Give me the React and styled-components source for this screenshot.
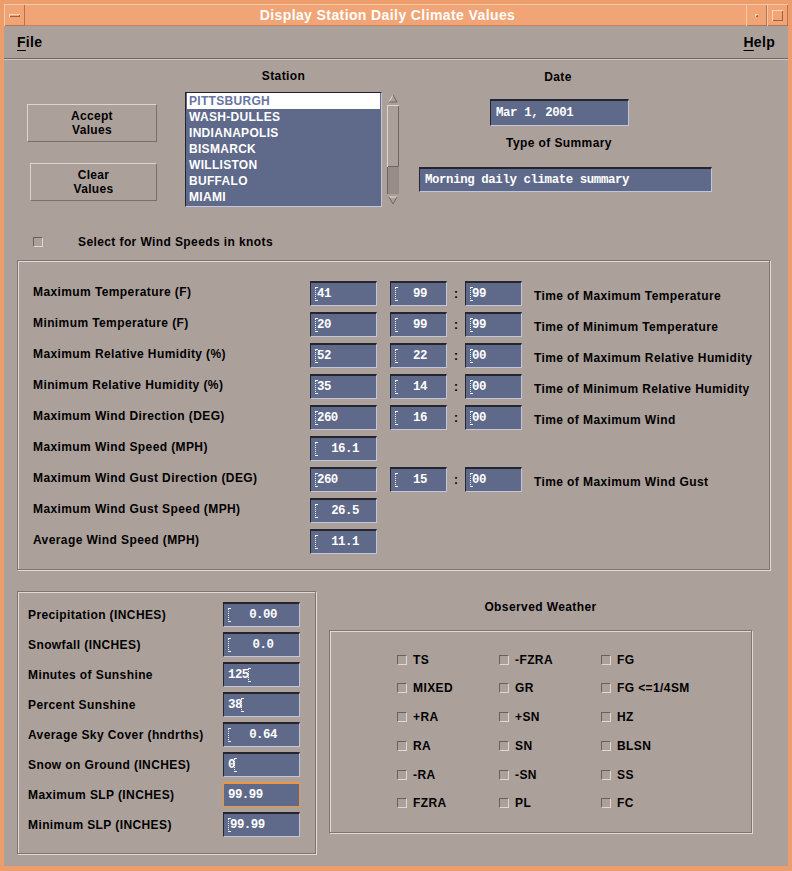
import React from 'react';
import styled, { createGlobalStyle } from 'styled-components';

const stations = ['PITTSBURGH', 'WASH-DULLES', 'INDIANAPOLIS', 'BISMARCK', 'WILLISTON', 'BUFFALO', 'MIAMI'];

const mainRows = [
  { label: 'Maximum Temperature (F)', v: '41', h: '99', m: '99', t: 'Time of Maximum Temperature' },
  { label: 'Minimum Temperature (F)', v: '20', h: '99', m: '99', t: 'Time of Minimum Temperature' },
  { label: 'Maximum Relative Humidity (%)', v: '52', h: '22', m: '00', t: 'Time of Maximum Relative Humidity' },
  { label: 'Minimum Relative Humidity (%)', v: '35', h: '14', m: '00', t: 'Time of Minimum Relative Humidity' },
  { label: 'Maximum Wind Direction (DEG)', v: '260', h: '16', m: '00', t: 'Time of Maximum Wind' },
  { label: 'Maximum Wind Speed (MPH)', v: '16.1', center: true },
  { label: 'Maximum Wind Gust Direction (DEG)', v: '260', h: '15', m: '00', t: 'Time of Maximum Wind Gust' },
  { label: 'Maximum Wind Gust Speed (MPH)', v: '26.5', center: true },
  { label: 'Average Wind Speed (MPH)', v: '11.1', center: true },
];

const sideRows = [
  { label: 'Precipitation (INCHES)', v: '0.00', cursor: 'center' },
  { label: 'Snowfall (INCHES)', v: '0.0', cursor: 'center' },
  { label: 'Minutes of Sunshine', v: '125', cursor: 'after' },
  { label: 'Percent Sunshine', v: '38', cursor: 'after' },
  { label: 'Average Sky Cover (hndrths)', v: '0.64', cursor: 'center' },
  { label: 'Snow on Ground (INCHES)', v: '0', cursor: 'after' },
  { label: 'Maximum SLP (INCHES)', v: '99.99', cursor: 'none', focus: true },
  { label: 'Minimum SLP (INCHES)', v: '99.99', cursor: 'before' },
];

const weather = [
  'TS', '-FZRA', 'FG',
  'MIXED', 'GR', 'FG <=1/4SM',
  '+RA', '+SN', 'HZ',
  'RA', 'SN', 'BLSN',
  '-RA', '-SN', 'SS',
  'FZRA', 'PL', 'FC',
];

const GlobalStyle = createGlobalStyle`
  body {
    margin: 0;
    background: #aca09b;
    font-family: "Liberation Sans", Arial, sans-serif;
  }
`;

const Window = styled.div`
  width: 792px;
  height: 871px;
  box-sizing: border-box;
  border: 4px solid #eb9d6b;
  border-bottom-width: 5px;
  background: #aca09b;
  display: flex;
  flex-direction: column;
`;

const TitleBar = styled.div`
  display: flex;
  height: 22px;
  background: #f1a577;
  box-shadow: inset 1px 1px 0 #f8c9a8, inset -1px -1px 0 #c98558;
`;

const TitleButton = styled.div`
  width: 21px;
  display: flex;
  align-items: center;
  justify-content: center;
  box-shadow: inset 1px 1px 0 #f8c9a8, inset -1px -1px 0 #b7744a;
`;

const MenuGlyph = styled.div`
  width: 11px;
  height: 3px;
  background: #f1a577;
  box-shadow: inset 1px 1px 0 #fbd6bd, inset -1px -1px 0 #9c6140;
`;

const MinGlyph = styled.div`
  width: 3px;
  height: 3px;
  box-shadow: inset 1px 1px 0 #fbd6bd, inset -1px -1px 0 #9c6140;
`;

const MaxGlyph = styled.div`
  width: 11px;
  height: 11px;
  box-shadow: inset 1px 1px 0 #fbd6bd, inset -1px -1px 0 #9c6140;
`;

const Title = styled.div`
  flex: 1;
  text-align: center;
  color: #fff;
  font-weight: bold;
  font-size: 14px;
  letter-spacing: 0.4px;
  line-height: 22px;
  padding-left: 4px;
`;

const MenuBar = styled.div`
  height: 32px;
  display: flex;
  justify-content: space-between;
  align-items: center;
  padding: 0 13px 0 13px;
  border-bottom: 1px solid #6f6661;
  box-shadow: 0 1px 0 #d3cac6;
`;

const MenuItem = styled.div`
  font-size: 14px;
  font-weight: bold;
  letter-spacing: 0.3px;
  span {
    text-decoration: underline;
    text-underline-offset: 3px;
  }
`;

const Content = styled.div`
  flex: 1;
  padding: 0 13px;
  display: flex;
  flex-direction: column;
`;

const TopRow = styled.div`
  display: flex;
  height: 148px;
`;

const ButtonCol = styled.div`
  width: 130px;
  margin-left: 10px;
  padding-top: 45px;
  display: flex;
  flex-direction: column;
  align-items: flex-end;
  gap: 21px;
`;

const PushButton = styled.div`
  width: ${p => p.$w}px;
  height: 38px;
  box-sizing: border-box;
  display: flex;
  align-items: center;
  justify-content: center;
  text-align: center;
  font-size: 12px;
  font-weight: bold;
  letter-spacing: 0.3px;
  line-height: 14px;
  border: 1px solid;
  border-color: #ddd5d1 #7b716c #7b716c #ddd5d1;
`;

const StationCol = styled.div`
  margin-left: 28px;
  width: 215px;
  padding-top: 9px;
`;

const Caption = styled.div`
  width: ${p => p.$w}px;
  text-align: center;
  font-size: 12px;
  font-weight: bold;
  letter-spacing: 0.4px;
  line-height: 16px;
`;

const ListRow = styled.div`
  display: flex;
  gap: 5px;
  margin-top: 8px;
`;

const ListBox = styled.div`
  width: 197px;
  height: 115px;
  box-sizing: border-box;
  background: #5f6a8b;
  border: 1px solid;
  border-color: #23232e #c2c6dc #c2c6dc #23232e;
  padding: 0 1px;
`;

const ListItem = styled.div`
  height: 16px;
  line-height: 16px;
  padding-left: 2px;
  font-size: 12px;
  font-weight: bold;
  letter-spacing: 0.3px;
  color: ${p => (p.$selected ? '#6874a2' : '#fff')};
  background: ${p => (p.$selected ? '#fff' : 'transparent')};
`;

const ScrollBar = styled.div`
  width: 12px;
  height: 115px;
  display: flex;
  flex-direction: column;
  background: #978c87;
  box-shadow: inset 1px 1px 0 #6f6661;
`;

const ScrollArrow = styled.div`
  height: 13px;
  display: flex;
  align-items: center;
  justify-content: center;
  background: #aca09b;
`;

const ScrollThumb = styled.div`
  height: 62px;
  background: #aca09b;
  box-shadow: inset 1px 1px 0 #ddd5d1, inset -1px -1px 0 #6f6661;
`;

const ScrollTrough = styled.div`
  flex: 1;
`;

const DateCol = styled.div`
  margin-left: 19px;
  width: 293px;
  padding-top: 10px;
  display: flex;
  flex-direction: column;
`;

const valueFont = `
  color: #fff;
  font-family: "Liberation Mono", "DejaVu Sans Mono", monospace;
  font-weight: bold;
  font-size: 12.4px;
  letter-spacing: -0.5px;
`;

const TextField = styled.div`
  width: ${p => p.$w}px;
  height: ${p => p.$h}px;
  box-sizing: border-box;
  margin-left: ${p => p.$ml || 0}px;
  margin-top: ${p => p.$mt || 0}px;
  background: #5f6a8b;
  border-top: 2px solid #25252f;
  border-left: 1px solid #25252f;
  border-bottom: 1px solid #c2c6dc;
  border-right: 1px solid #c2c6dc;
  ${valueFont}
  letter-spacing: -0.4px;
  display: flex;
  align-items: center;
  padding-left: 5px;
`;

const KnotsRow = styled.div`
  display: flex;
  align-items: center;
  margin-top: 27px;
  height: 16px;
  padding-left: 16px;
  gap: 35px;
  font-size: 12px;
  font-weight: bold;
  letter-spacing: 0.4px;
`;

const CheckBox = styled.div`
  width: 10px;
  height: 10px;
  flex: none;
  box-sizing: border-box;
  border: 1px solid;
  border-color: #6a615c #e0d8d4 #e0d8d4 #6a615c;
`;

const Frame = styled.div`
  box-sizing: border-box;
  width: ${p => p.$w}px;
  height: ${p => p.$h}px;
  border: 1px solid #7e7470;
  box-shadow: inset 1px 1px 0 #e2dad6, 1px 1px 0 #e2dad6;
`;

const MainFrame = styled(Frame)`
  margin-top: 10px;
  padding: 20px 0 0 15px;
  display: grid;
  grid-template-columns: 277px 67px 13px 57px 18px 57px 12px auto;
  grid-auto-rows: 25px;
  row-gap: 6px;
  align-items: center;
`;

const Label = styled.div`
  font-size: 12px;
  font-weight: bold;
  letter-spacing: 0.4px;
  white-space: nowrap;
  margin-bottom: ${p => p.$lift || 0}px;
  margin-top: ${p => p.$drop || 0}px;
`;

const Colon = styled.div`
  text-align: center;
  font-size: 12px;
  font-weight: bold;
`;

const Field = styled.div`
  height: 25px;
  box-sizing: border-box;
  background: #5f6a8b;
  border-top: 2px solid #25252f;
  border-left: 1px solid #25252f;
  border-bottom: 1px solid #c2c6dc;
  border-right: 1px solid #c2c6dc;
  ${p => p.$focus && 'border: 1px solid #f0953f; border-top-width: 2px;'}
  ${valueFont}
  display: flex;
  align-items: center;
  padding: 0 3px 0 4px;
`;

const Value = styled.span`
  flex: ${p => (p.$center ? 1 : 'none')};
  display: flex;
  align-items: center;
  justify-content: ${p => (p.$center ? 'center' : 'flex-start')};
`;

const Cursor = styled.span`
  display: inline-block;
  width: 2px;
  height: 14px;
  flex: none;
  border-left: 1px dotted #f4f4fb;
  border-top: 1px dotted #f4f4fb;
  border-bottom: 1px dotted #f4f4fb;
  box-sizing: border-box;
  margin-left: ${p => p.$ml || 0}px;
`;

const BottomRow = styled.div`
  display: flex;
  gap: 13px;
  margin-top: 21px;
`;

const SideFrame = styled(Frame)`
  padding: 10px 0 0 10px;
  display: grid;
  grid-template-columns: 195px 77px;
  grid-auto-rows: 25px;
  row-gap: 5px;
  align-items: center;
`;

const WeatherCol = styled.div`
  width: 423px;
  padding-top: 8px;
  display: flex;
  flex-direction: column;
`;

const WeatherFrame = styled(Frame)`
  margin-top: 15px;
  padding: 20px 0 0 67px;
  display: grid;
  grid-template-columns: repeat(3, 102px);
  grid-auto-rows: 17px;
  row-gap: 11.8px;
`;

const WeatherItem = styled.div`
  display: flex;
  align-items: center;
  gap: 6px;
  font-size: 12px;
  font-weight: bold;
  letter-spacing: 0.4px;
  white-space: nowrap;
`;

const Arrow = ({ up }) => (
  <svg width="10" height="9" viewBox="0 0 10 9">
    {up ? (
      <>
        <path d="M1 8 L5 1" stroke="#e2dad6" strokeWidth="1" fill="none" />
        <path d="M5 1 L9 8 L1 8" stroke="#6f6661" strokeWidth="1" fill="none" />
      </>
    ) : (
      <>
        <path d="M1 1 L9 1" stroke="#e2dad6" strokeWidth="1" fill="none" />
        <path d="M1 1 L5 8 L9 1" stroke="#6f6661" strokeWidth="1" fill="none" />
      </>
    )}
  </svg>
);

const Input = ({ value, cursor, focus }) => {
  if (cursor === 'center') {
    return (
      <Field>
        <Cursor />
        <Value $center>{value}</Value>
      </Field>
    );
  }
  return (
    <Field $focus={focus}>
      {cursor === 'before' && <Cursor />}
      <Value>{value}</Value>
      {cursor === 'after' && <Cursor $ml={-1} />}
    </Field>
  );
};

export default function App() {
  return (
    <>
      <GlobalStyle />
      <Window>
        <TitleBar>
          <TitleButton><MenuGlyph /></TitleButton>
          <Title>Display Station Daily Climate Values</Title>
          <TitleButton><MinGlyph /></TitleButton>
          <TitleButton><MaxGlyph /></TitleButton>
        </TitleBar>
        <MenuBar>
          <MenuItem><span>F</span>ile</MenuItem>
          <MenuItem><span>H</span>elp</MenuItem>
        </MenuBar>
        <Content>
          <TopRow>
            <ButtonCol>
              <PushButton $w={130}>Accept<br />Values</PushButton>
              <PushButton $w={127}>Clear<br />Values</PushButton>
            </ButtonCol>
            <StationCol>
              <Caption $w={197}>Station</Caption>
              <ListRow>
                <ListBox>
                  {stations.map((s, i) => (
                    <ListItem key={s} $selected={i === 0}>{s}</ListItem>
                  ))}
                </ListBox>
                <ScrollBar>
                  <ScrollArrow><Arrow up /></ScrollArrow>
                  <ScrollThumb />
                  <ScrollTrough />
                  <ScrollArrow><Arrow /></ScrollArrow>
                </ScrollBar>
              </ListRow>
            </StationCol>
            <DateCol>
              <Caption $w={278}>Date</Caption>
              <TextField $w={139} $h={27} $ml={71} $mt={14}>Mar 1, 2001</TextField>
              <Caption $w={280} style={{ marginTop: 9 }}>Type of Summary</Caption>
              <TextField $w={293} $h={25} $mt={16}>Morning daily climate summary</TextField>
            </DateCol>
          </TopRow>

          <KnotsRow>
            <CheckBox />
            Select for Wind Speeds in knots
          </KnotsRow>

          <MainFrame $w={753} $h={310}>
            {mainRows.map(r => (
              <React.Fragment key={r.label}>
                <Label $lift={4}>{r.label}</Label>
                <Input value={r.v} cursor={r.center ? 'center' : 'before'} />
                <span />
                {r.h ? (
                  <>
                    <Input value={r.h} cursor="center" />
                    <Colon>:</Colon>
                    <Input value={r.m} cursor="before" />
                    <span />
                    <Label $drop={4}>{r.t}</Label>
                  </>
                ) : (
                  <>
                    <span /><span /><span /><span /><span />
                  </>
                )}
              </React.Fragment>
            ))}
          </MainFrame>

          <BottomRow>
            <SideFrame $w={299} $h={263}>
              {sideRows.map(r => (
                <React.Fragment key={r.label}>
                  <Label>{r.label}</Label>
                  <Input value={r.v} cursor={r.cursor} focus={r.focus} />
                </React.Fragment>
              ))}
            </SideFrame>
            <WeatherCol>
              <Caption $w={423}>Observed Weather</Caption>
              <WeatherFrame $w={423} $h={203}>
                {weather.map(w => (
                  <WeatherItem key={w}>
                    <CheckBox />
                    {w}
                  </WeatherItem>
                ))}
              </WeatherFrame>
            </WeatherCol>
          </BottomRow>
        </Content>
      </Window>
    </>
  );
}
